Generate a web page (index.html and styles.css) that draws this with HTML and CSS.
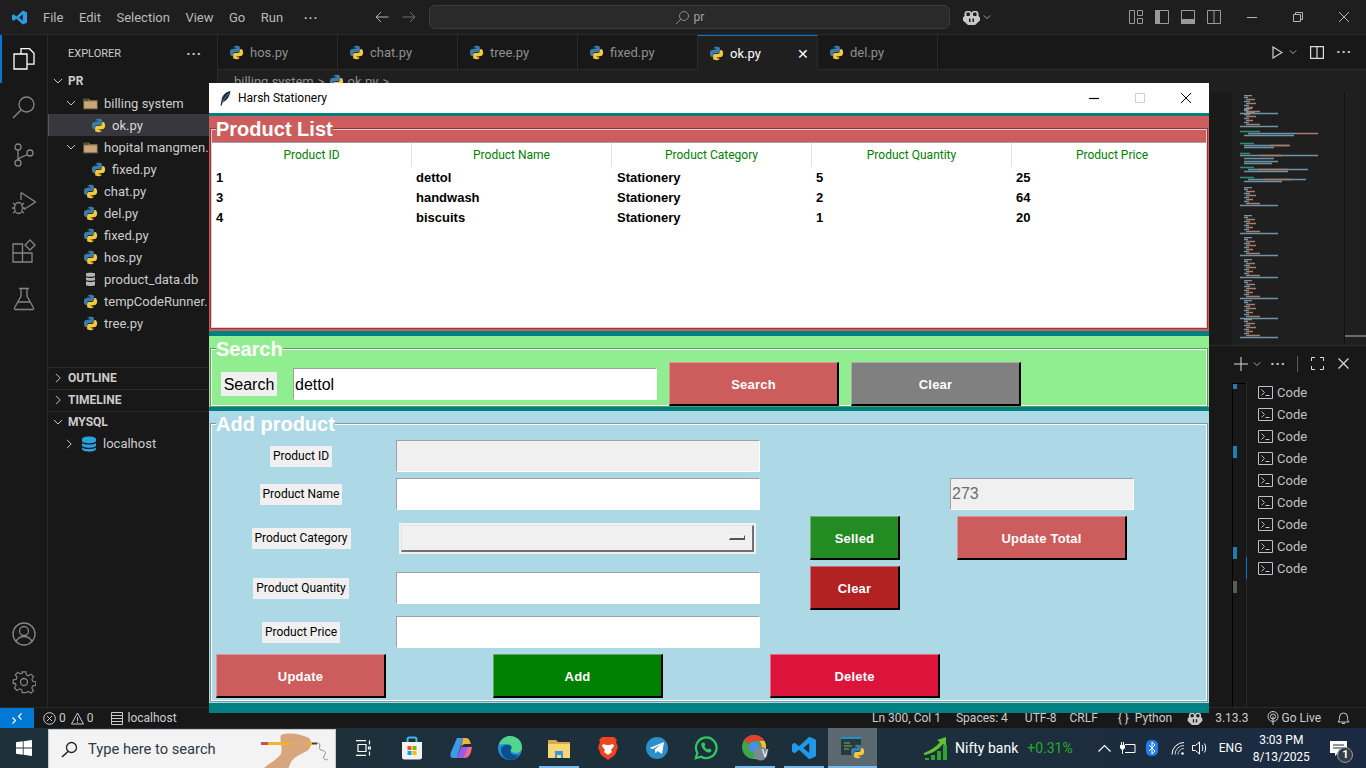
FILE: index.html
```html
<!DOCTYPE html>
<html lang="en">
<head>
    <meta charset="UTF-8">
    <title>Harsh Stationery</title>
    <link rel="stylesheet" href="styles.css">
</head>
<body>

    <!-- shared icons -->
    <svg class="defs" width="0" height="0">
        <symbol id="py" viewBox="0 0 16 16">
            <path fill="#3b7cab" d="M7.9.8C4.9.8 5 2.2 5 2.2v1.5h3v.5H3.5S1 4 1 7.9c0 3.8 2.2 3.7 2.2 3.7h1.2V9.8s-.1-2.2 2.1-2.2h3.1s2 0 2-2V2.6S11.9.8 7.900.8zM6.200 1.900a.6.6 0 1 1 0 1.300.6.6 0 0 1 0-1.300z"/>
            <path fill="#f6c93c" d="M8.100 15.200c3 0 2.900-1.400 2.900-1.400v-1.500H8v-.5h4.500S15 12 15 8.100c0-3.800-2.200-3.700-2.200-3.700h-1.200v1.800s.1 2.200-2.100 2.200H6.400s-2 0-2 2v3s-.3 1.800 3.700 1.800zm1.700-1.100a.6.6 0 1 1 0-1.300.6.6 0 0 1 0 1.300z"/>
        </symbol>
        <symbol id="folder" viewBox="0 0 16 16">
            <path fill="#c8a878" d="M1 5h14v8.500H1z"/>
            <path fill="#8f7750" d="M.5 3h5.700l1.500 1.500h7.800V14H.5zm.8.8v1.200h4.600L5.400 3.800zm0 2v7.400h13.400V5.800z"/>
        </symbol>
        <symbol id="chev-down" viewBox="0 0 10 10">
            <path fill="none" stroke="#c5c5c5" d="M1 3l4 4 4-4"/>
        </symbol>
        <symbol id="chev-right" viewBox="0 0 10 10">
            <path fill="none" stroke="#c5c5c5" d="M3 .8l4.200 4.200L3 9.200"/>
        </symbol>
        <symbol id="term" viewBox="0 0 15 15">
            <path fill="none" stroke="#c0c0c0" d="M.5 1.500h14v12H.5zM3.500 4.500l3 3-3 3M7.500 10.500h4"/>
        </symbol>
        <symbol id="mm-block" viewBox="0 0 60 20">
            <path fill="none" stroke="#6d93a8" stroke-width="1.300" d="M4 .5h8M4 2.500h4M4 6.500h6M4 10.500h5M4 14.500h5"/>
            <path fill="none" stroke="#a87c66" stroke-width="1.300" d="M6 4.500h9M6 8.500h10M6 12.500h7M6 16.500h14"/>
            <path fill="none" stroke="#6d93a8" stroke-width="1.300" d="M0 18.500h38"/>
        </symbol>
    </svg>

    <div class="vscode">
        <header class="titlebar">
            <svg class="logo" width="15" height="15" viewBox="0 0 16 16"><path fill="#2f9ae0" d="M11.500.5L16 2.500v11l-4.500 2-6.800-6.300L1.800 11.500 0 10.500v-5l1.800-1 2.900 2.300zM11.500 4.600L7.600 8l3.900 3.400z"/></svg>
            <nav class="menu">
                <span>File</span><span>Edit</span><span>Selection</span><span>View</span><span>Go</span><span>Run</span><span class="menu-dots">···</span>
            </nav>
            <div class="nav-arrows">
                <svg width="14" height="12" viewBox="0 0 14 12"><path fill="none" stroke="#b0b0b0" d="M13.500 6H1M6 1L1 6l5 5"/></svg>
                <svg width="14" height="12" viewBox="0 0 14 12"><path fill="none" stroke="#6f6f6f" d="M.5 6H13M8 1l5 5-5 5"/></svg>
            </div>
            <div class="command-box">
                <svg width="15" height="15" viewBox="0 0 15 15"><circle cx="9" cy="6" r="4.500" fill="none" stroke="#8c8c8c"/><path stroke="#8c8c8c" d="M5.800 9.200L1 14"/></svg>
                <span>pr</span>
            </div>
            <svg class="copilot" width="17" height="15" viewBox="0 0 17 15"><path fill="#c8c8c8" d="M3 1h4l1.500 1.500L10 1h4l1.500 2v3l1.500 1.500v3L12 15H5L0 10.500v-3L1.500 6V3z"/><path fill="#1e1e1e" d="M3.500 2.500h3l.7 1.500-.7 2h-3zM10.500 2.500h3V6h-3l-.7-2zM6 8.500h1.500V12H6zM9.500 8.500H11V12H9.500z"/></svg>
            <svg class="small-chev" width="8" height="8"><use href="#chev-down"/></svg>
            <div class="layout-icons">
                <svg width="14" height="14" viewBox="0 0 14 14"><path fill="none" stroke="#9a9a9a" d="M.5.500h5v13h-5zM8.500.500h5v5h-5zM8.500 8.500h5v5h-5z"/></svg>
                <svg width="14" height="14" viewBox="0 0 14 14"><rect width="5" height="14" fill="#9a9a9a"/><path fill="none" stroke="#9a9a9a" d="M.5.500h13v13H.5z"/></svg>
                <svg width="14" height="14" viewBox="0 0 14 14"><rect y="9" width="14" height="5" fill="#9a9a9a"/><path fill="none" stroke="#9a9a9a" d="M.5.500h13v13H.5z"/></svg>
                <svg width="14" height="14" viewBox="0 0 14 14"><path fill="none" stroke="#9a9a9a" d="M.5.500h13v13H.5zM7 .5v13"/></svg>
            </div>
            <div class="win-controls">
                <svg width="10" height="10" viewBox="0 0 10 10"><path stroke="#b5b5b5" d="M0 5.500h10"/></svg>
                <svg width="10" height="10" viewBox="0 0 10 10"><path fill="none" stroke="#b5b5b5" d="M.5 2.500h7v7h-7zM2.500 2.500v-2h7v7h-2"/></svg>
                <svg width="10" height="10" viewBox="0 0 10 10"><path stroke="#b5b5b5" d="M0 0l10 10M10 0L0 10"/></svg>
            </div>
        </header>

        <div class="workbench">
            <aside class="activity">
                <div class="act active">
                    <svg width="24" height="24" viewBox="0 0 24 24"><path fill="none" stroke="#fff" stroke-width="1.300" d="M9 7V1.700h8.500l4.500 4.500v11h-7M2 7h13v15H2z"/></svg>
                </div>
                <div class="act">
                    <svg width="24" height="24" viewBox="0 0 24 24"><circle cx="14.500" cy="9.500" r="7.500" fill="none" stroke="#858585" stroke-width="1.300"/><path stroke="#858585" stroke-width="1.500" d="M9 15l-8 8"/></svg>
                </div>
                <div class="act">
                    <svg width="24" height="24" viewBox="0 0 24 24"><g fill="none" stroke="#858585" stroke-width="1.300"><circle cx="6" cy="4" r="3"/><circle cx="6" cy="20" r="3"/><circle cx="18" cy="10" r="3"/><path d="M6 7v10M15.500 11.500C12 14 8 13 6.500 16.500"/></g></svg>
                </div>
                <div class="act">
                    <svg width="24" height="24" viewBox="0 0 24 24"><g fill="none" stroke="#858585" stroke-width="1.300"><path d="M9 1.500L23.500 11 12 18.500M9 9V1.500"/><ellipse cx="6.500" cy="17" rx="4" ry="5.500"/><path d="M1 12l2.500 2M12 12l-2.500 2M0 17h2.500M10.500 17H13M1 22l2-1.500M12 22l-2-1.500"/></g></svg>
                </div>
                <div class="act">
                    <svg width="24" height="24" viewBox="0 0 24 24"><path fill="none" stroke="#858585" stroke-width="1.300" d="M1 5h9.500v18H1zM1 14h19v9h-9.500M10.500 14V5M18 1l5 5-5 5-5-5z"/></svg>
                </div>
                <div class="act">
                    <svg width="24" height="24" viewBox="0 0 24 24"><path fill="none" stroke="#858585" stroke-width="1.300" d="M7 1.500h10M9 1.500V9L2.500 21a1 1 0 0 0 1 1.500h17a1 1 0 0 0 1-1.500L15 9V1.500M6 15h12"/></svg>
                </div>
                <div class="act-spacer"></div>
                <div class="act">
                    <svg width="24" height="24" viewBox="0 0 24 24"><g fill="none" stroke="#858585" stroke-width="1.300"><circle cx="12" cy="12" r="11"/><circle cx="12" cy="9" r="4.500"/><path d="M4 20c1.500-4 4-5.500 8-5.500s6.500 1.500 8 5.500"/></g></svg>
                </div>
                <div class="act">
                    <svg width="24" height="24" viewBox="0 0 24 24"><g fill="none" stroke="#858585" stroke-width="1.300"><circle cx="12" cy="12" r="3.500"/><path d="M10 1h4l.7 3.300 2.200 1 2.900-1.800 2.800 2.800-1.800 2.900 1 2.200 3.200.6v4l-3.300.7-1 2.200 1.800 2.900-2.800 2.800-2.900-1.800-2.200 1L14 24h-4l-.7-3.200-2.200-1-2.900 1.800-2.800-2.800 1.800-2.900-1-2.200L0 14v-4l3.200-.7 1-2.200-1.800-2.900 2.800-2.800 2.900 1.800 2.200-1z" transform="translate(1.200 1) scale(.9)"/></g></svg>
                </div>
            </aside>

            <aside class="sidebar">
                <div class="side-head"><span>EXPLORER</span><span class="side-dots">···</span></div>
                <div class="row sec"><svg class="chev"><use href="#chev-down"/></svg><b>PR</b></div>
                <div class="row folder"><svg class="chev"><use href="#chev-down"/></svg><svg class="ico"><use href="#folder"/></svg>billing system</div>
                <div class="row nested selected"><svg class="ico"><use href="#py"/></svg>ok.py</div>
                <div class="row folder"><svg class="chev"><use href="#chev-down"/></svg><svg class="ico"><use href="#folder"/></svg>hopital mangmen.</div>
                <div class="row nested"><svg class="ico"><use href="#py"/></svg>fixed.py</div>
                <div class="row file"><svg class="ico"><use href="#py"/></svg>chat.py</div>
                <div class="row file"><svg class="ico"><use href="#py"/></svg>del.py</div>
                <div class="row file"><svg class="ico"><use href="#py"/></svg>fixed.py</div>
                <div class="row file"><svg class="ico"><use href="#py"/></svg>hos.py</div>
                <div class="row file">
                    <svg class="ico" viewBox="0 0 15 15"><path fill="#b5b5b5" d="M3 1.500C3 .5 12 .5 12 1.500V4c0 1-9 1-9 0zM3 5.300c2 1 7 1 9 0V8c0 1-9 1-9 0zM3 9.300c2 1 7 1 9 0V13c0 1.300-9 1.300-9 0z"/></svg>product_data.db
                </div>
                <div class="row file"><svg class="ico"><use href="#py"/></svg>tempCodeRunner.</div>
                <div class="row file"><svg class="ico"><use href="#py"/></svg>tree.py</div>
                <div class="side-gap"></div>
                <div class="row sec closed"><svg class="chev"><use href="#chev-right"/></svg><b>OUTLINE</b></div>
                <div class="row sec closed"><svg class="chev"><use href="#chev-right"/></svg><b>TIMELINE</b></div>
                <div class="row sec closed"><svg class="chev"><use href="#chev-down"/></svg><b>MYSQL</b></div>
                <div class="row host">
                    <svg class="chev"><use href="#chev-right"/></svg>
                    <svg class="db" viewBox="0 0 16 16"><path fill="#29a3dc" d="M1 3c0-3.500 14-3.500 14 0v2c0 3-14 3-14 0zM1 7c2.500 2 11.500 2 14 0v2.500c0 3-14 3-14 0zM1 11.500c2.500 2 11.500 2 14 0V13c0 3.500-14 3.500-14 0z"/></svg>
                    localhost
                </div>
            </aside>

            <main class="editor">
                <div class="tabs">
                    <div class="tab"><svg class="ico"><use href="#py"/></svg>hos.py</div>
                    <div class="tab"><svg class="ico"><use href="#py"/></svg>chat.py</div>
                    <div class="tab"><svg class="ico"><use href="#py"/></svg>tree.py</div>
                    <div class="tab"><svg class="ico"><use href="#py"/></svg>fixed.py</div>
                    <div class="tab current"><svg class="ico"><use href="#py"/></svg>ok.py<span class="tab-x">✕</span></div>
                    <div class="tab"><svg class="ico"><use href="#py"/></svg>del.py</div>
                    <div class="tab-actions">
                        <svg class="play" width="11" height="13" viewBox="0 0 11 13"><path fill="none" stroke="#cfcfcf" stroke-width="1.200" d="M1 1l9 5.500L1 12z"/></svg>
                        <svg width="8" height="8"><use href="#chev-down"/></svg>
                        <svg class="split" width="14" height="13" viewBox="0 0 14 13"><path fill="none" stroke="#dcdcdc" stroke-width="1.200" d="M.6.600h12.800v11.800H.6zM7 .6v11.800"/></svg>
                        <span class="side-dots">···</span>
                    </div>
                </div>
                <div class="crumbs">billing system <i>&gt;</i> <svg class="ico"><use href="#py"/></svg> ok.py <i>&gt;</i></div>
                <div class="code-area">
                    <div class="code-shade"></div>
                    <svg class="minimap" width="90" height="250" viewBox="0 0 90 250">
                        <use href="#mm-block" y="2" width="60" height="20"/>
                        <use href="#mm-block" y="15" width="60" height="20"/>
                        <use href="#mm-block" y="94" width="60" height="20"/>
                        <use href="#mm-block" y="122" width="60" height="20"/>
                        <use href="#mm-block" y="144" width="60" height="20"/>
                        <use href="#mm-block" y="166" width="60" height="20"/>
                        <use href="#mm-block" y="187" width="60" height="20"/>
                        <use href="#mm-block" y="207" width="60" height="20"/>
                        <use href="#mm-block" y="226" width="60" height="20"/>
                        <path fill="none" stroke="#2f8f70" stroke-width="1.300" d="M0 38.500h20M0 50.500h14M0 60.500h10M0 74.500h14M0 84.500h14"/>
                        <path fill="none" stroke="#6d93a8" stroke-width="1.300" d="M8 40.500h50M4 42.500h50M4 52.500h45M4 54.500h30M0 62.500h78M4 65.500h30M4 68.500h34M4 70.500h28M8 76.500h60M4 78.500h44M8 86.500h58M4 88.500h38"/>
                        <path fill="none" stroke="#a87c66" stroke-width="1.300" d="M58 40.500h20M30 52.500h20M20 62.500h22M18 76.500h30M24 86.500h28"/>
                    </svg>
                    <div class="minimap-rail"><div class="rail-thumb"></div></div>
                </div>
                <div class="panel">
                    <div class="panel-tools">
                        <svg class="t-plus" width="14" height="14" viewBox="0 0 14 14"><path stroke="#dcdcdc" d="M7 0v14M0 7h14"/></svg>
                        <svg class="t-chev" width="8" height="8"><use href="#chev-down"/></svg>
                        <span class="side-dots">···</span>
                        <span class="tool-sep"></span>
                        <svg class="t-max" width="13" height="13" viewBox="0 0 13 13"><path fill="none" stroke="#dcdcdc" d="M.5 4V.5H4M9 .5h3.500V4M12.500 9v3.500H9M4 12.500H.5V9"/></svg>
                        <svg width="11" height="11" viewBox="0 0 11 11"><path stroke="#dcdcdc" stroke-width="1.200" d="M.5.500l10 10M10.500.500l-10 10"/></svg>
                    </div>
                    <div class="panel-body">
                        <div class="term-strip">
                            <span class="mark m1"></span><span class="mark m2"></span><span class="mark m3"></span><span class="mark m4"></span>
                        </div>
                        <ul class="term-list">
                            <li><svg><use href="#term"/></svg>Code</li>
                            <li><svg><use href="#term"/></svg>Code</li>
                            <li><svg><use href="#term"/></svg>Code</li>
                            <li><svg><use href="#term"/></svg>Code</li>
                            <li><svg><use href="#term"/></svg>Code</li>
                            <li><svg><use href="#term"/></svg>Code</li>
                            <li><svg><use href="#term"/></svg>Code</li>
                            <li><svg><use href="#term"/></svg>Code</li>
                            <li class="last"><svg><use href="#term"/></svg>Code</li>
                        </ul>
                    </div>
                </div>
            </main>
        </div>

        <footer class="statusbar">
            <div class="remote"><svg width="10" height="11" viewBox="0 0 10 11"><path fill="none" stroke="#fff" stroke-width="1.200" d="M.5 4.500l3 3-3 3M9.500.5l-3 3 3 3"/></svg></div>
            <div class="st-left">
                <svg width="13" height="13" viewBox="0 0 13 13"><circle cx="6.500" cy="6.500" r="5.800" fill="none" stroke="#ccc"/><path stroke="#ccc" d="M4 4l5 5M9 4l-5 5"/></svg><span>0</span>
                <svg class="st-warn" width="13" height="13" viewBox="0 0 13 13"><path fill="none" stroke="#ccc" d="M6.500 1L12.500 12H.5zM6.500 5v4M6.500 10v1"/></svg><span>0</span>
                <svg class="st-db" width="12" height="13" viewBox="0 0 12 13"><path fill="none" stroke="#ccc" d="M.5.500h11v3H.5zM.5 3.500h11v3H.5zM.5 6.500h11v3H.5zM.5 9.500h11v3H.5z"/></svg><span>localhost</span>
            </div>
            <div class="st-right">
                <span>Ln 300, Col 1</span>
                <span class="s-sp">Spaces: 4</span>
                <span class="s-en">UTF-8</span>
                <span class="s-cr">CRLF</span>
                <span class="s-py">{ }&nbsp; Python</span>
                <svg class="s-co" width="16" height="13" viewBox="0 0 17 15"><path fill="#c8c8c8" d="M3 1h4l1.500 1.500L10 1h4l1.500 2v3l1.500 1.500v3L12 15H5L0 10.500v-3L1.500 6V3z"/><path fill="#181818" d="M3.500 2.500h3l.7 1.500-.7 2h-3zM10.500 2.500h3V6h-3l-.7-2zM6 8.500h1.500V12H6zM9.500 8.500H11V12H9.500z"/></svg>
                <span class="s-ve">3.13.3</span>
                <svg class="s-lv" width="12" height="14" viewBox="0 0 12 14"><g fill="none" stroke="#ccc"><circle cx="6" cy="5.500" r="5"/><circle cx="6" cy="5.500" r="2.500"/><path d="M6 5.500V14"/></g></svg>
                <span class="s-gl">Go Live</span>
                <svg class="s-be" width="13" height="14" viewBox="0 0 13 14"><path fill="none" stroke="#ccc" d="M1 11c1.500-1.500 1.500-3 1.500-5a4 4 0 0 1 8 0c0 2 0 3.500 1.500 5zM5 12.500h3"/></svg>
            </div>
        </footer>
    </div>

    <footer class="taskbar">
        <div class="start">
            <svg width="16" height="16" viewBox="0 0 16 16"><path fill="#fff" d="M0 2.300L6.800 1.300V7.600H0zM7.600 1.200L16 0V7.600H7.600zM0 8.400H6.800V14.700L0 13.700zM7.600 8.400H16V16L7.600 14.800z"/></svg>
        </div>
        <div class="search-box">
            <svg width="17" height="17" viewBox="0 0 17 17"><circle cx="10.500" cy="6.500" r="5" fill="none" stroke="#222" stroke-width="1.300"/><path stroke="#222" stroke-width="1.600" d="M7 10.500L1 16"/></svg>
            <span>Type here to search</span>
            <svg class="doodle" width="72" height="39" viewBox="0 0 72 39">
                <path fill="#d8a67e" d="M2 39C8 33 16 30 20 24 22 18 18 8 20 5 28 2 40 4 48 8 52 12 50 18 46 21 40 24 34 26 30 32L27 39z"/>
                <path stroke="#f0b429" stroke-width="3" d="M7 13.500h44"/>
                <path stroke="#c0565a" stroke-width="3" d="M0 13.500h7"/>
                <path stroke="#4a3a20" stroke-width="2" d="M51 13.500h5"/>
                <path fill="#d8a67e" d="M28 10h16l2 2v4l-4 3H30z" opacity=".9"/>
                <path fill="none" stroke="#8d8d8d" d="M56 13c6 0 0 6 4 7 4 1 6 2 3 6-2 3 3 5 4 3"/>
            </svg>
        </div>
        <div class="slot"><svg width="16" height="16" viewBox="0 0 16 16"><path fill="none" stroke="#fff" stroke-width="1.200" d="M1 .6h10M3 4.500h8v7H3zM1 15.400h10M14.500 .5v4M14.500 11.500v4M13.500 7h2v2h-2z"/></svg></div>
        <div class="slot"><svg width="22" height="24" viewBox="0 0 22 24"><path fill="none" stroke="#45b6f0" stroke-width="2" d="M6.500 6V3.500a2 2 0 0 1 2-2h5a2 2 0 0 1 2 2V6"/><path fill="#f2f2f2" d="M1 6h20v15a2.500 2.500 0 0 1-2.500 2.500h-15A2.500 2.500 0 0 1 1 21z"/><rect x="6.500" y="10" width="4" height="4" fill="#f25022"/><rect x="11.500" y="10" width="4" height="4" fill="#7fba00"/><rect x="6.500" y="15" width="4" height="4" fill="#00a4ef"/><rect x="11.500" y="15" width="4" height="4" fill="#ffb900"/></svg></div>
        <div class="slot"><svg width="22" height="22" viewBox="0 0 22 22"><path fill="#3a9be8" d="M7 1h6l-6 20H3C0 21 0 18 1 15z"/><path fill="#f2688e" d="M9 21h6c3 0 5-3 6-6l1-5h-7z"/><path fill="#f0b43c" d="M13 1h3c3 0 4 3 5 6h-6c-2 0-3 2-4 3z"/><path fill="#9a5be8" d="M7 21l4-11h7l-4 11z"/></svg></div>
        <div class="slot"><svg width="24" height="24" viewBox="0 0 24 24"><circle cx="12" cy="12" r="12" fill="#1b8fd8"/><path fill="#52d58a" d="M1 9C3 2 9 0 12 0c7 0 12 5 12 11 0 4-3 6-6 6-4 0-6-2-5-4 2-2 0-5-4-5-3 0-6 0-8 1z"/><path fill="#0d4f8b" d="M13 24C7 24 3 19 3 14c0-3 3-5 6-5 4 0 5 2 4 4-2 3 0 6 5 6 1 0 2 0 3-1-2 3-5 6-8 6z"/></svg></div>
        <div class="slot running"><svg width="22" height="19" viewBox="0 0 22 19"><path fill="#d7a94e" d="M0 1h8l2 2h12v4H0z"/><path fill="#f8d775" d="M0 5h22v14H0z"/><path fill="#3a96dd" d="M7 12h8v7h-2v-3H9v3H7z"/></svg></div>
        <div class="slot"><svg width="20" height="24" viewBox="0 0 20 24"><path fill="#f0441f" d="M4 1h12l3 3-1 2 2 5-3 8-7 5-7-5-3-8 2-5-1-2z"/><path fill="#fff" d="M5 8l4 1h2l4-1 1 2-3 4 1 2-4 3-4-3 1-2-3-4z"/></svg></div>
        <div class="slot"><svg width="22" height="22" viewBox="0 0 22 22"><circle cx="11" cy="11" r="11" fill="#2a8fc9"/><path fill="#fff" d="M3.500 11L18 5l-2 12-4.500-3-2 2.500-.7-4L15 7l-8 5z"/></svg></div>
        <div class="slot"><svg width="24" height="24" viewBox="0 0 24 24"><path fill="none" stroke="#2fc95d" stroke-width="2.200" d="M1.800 22.200l1.500-5.400A10.300 10.300 0 1 1 7.200 20.700z"/><path fill="#2fc95d" d="M8.500 6.500c-1 .5-1.500 2-1 3.500 1 3 3.500 5.500 6.500 6.500 1.500.4 3-.5 3.500-1.500l-.3-1.500-2.300-1-1 1c-1.500-.5-3-2-3.500-3.500l1-1-1-2.300z"/></svg></div>
        <div class="slot running">
            <svg width="26" height="26" viewBox="0 0 26 26"><circle cx="12" cy="12" r="12" fill="#3da64a"/><path fill="#e34133" d="M12 0a12 12 0 0 1 10.400 6H12a6 6 0 0 0-5.500 3.500L2.200 5A12 12 0 0 1 12 0z"/><path fill="#fbc02d" d="M22.400 6A12 12 0 0 1 12 24l5-8a6 6 0 0 0 0-10z"/><circle cx="12" cy="12" r="5" fill="#4b8bf5"/><circle cx="18.500" cy="18.500" r="7" fill="#7a8a94"/></svg>
            <span class="chrome-v">V</span>
        </div>
        <div class="slot running"><svg width="24" height="24" viewBox="0 0 16 16"><path fill="#1f9ae8" d="M11.500.5L16 2.500v11l-4.500 2-6.800-6.300L1.800 11.500 0 10.500v-5l1.800-1 2.900 2.300zM11.500 4.600L7.600 8l3.900 3.400z"/></svg></div>
        <div class="slot slot-on">
            <svg width="24" height="24" viewBox="0 0 24 24"><rect y="1" width="20" height="18" fill="#2a3a34"/><rect y="1" width="20" height="2" fill="#1f90d8"/><path stroke="#6fae7a" d="M3 7h6M3 10h8M3 13h5"/><svg x="9" y="8" width="15" height="15"><use href="#py"/></svg></svg>
        </div>
        <div class="tray">
            <svg class="nifty" width="24" height="24" viewBox="0 0 24 24"><path fill="#2ea32e" d="M1 22h4v2H1zM7 19h4v5H7zM13 15h4v9h-4zM19 9h4v15h-4z"/><path fill="#63c22f" d="M0 17C7 14 12 11 16 6l-3-2 9-3 0 9-3-2C15 13 8 18 0 19z"/></svg>
            <span class="nifty-name">Nifty bank</span>
            <span class="nifty-val">+0.31%</span>
            <svg class="t-up" width="13" height="8" viewBox="0 0 13 8"><path fill="none" stroke="#fff" stroke-width="1.200" d="M.5 7.500l6-6 6 6"/></svg>
            <svg class="t-bat" width="16" height="12" viewBox="0 0 16 12"><path fill="none" stroke="#fff" d="M5 2.500h10v8H5"/><path fill="#fff" d="M0 3h5v3L3 8v4H2V8L0 6zM1 0h1v3H1zM3 0h1v3H3z"/></svg>
            <svg class="t-bt" width="12" height="16" viewBox="0 0 12 16"><rect width="12" height="16" rx="5" fill="#1f7ee8"/><path fill="none" stroke="#fff" d="M3 5l6 6-3 3V2l3 3-6 6"/></svg>
            <svg class="t-wifi" width="15" height="13" viewBox="0 0 15 13"><g fill="none" stroke="#fff"><path d="M1 12.500A12 12 0 0 1 13 .5"/><path d="M4 12.500A9 9 0 0 1 13 3.500" opacity=".8"/><path d="M7 12.500A6 6 0 0 1 13 6.500" opacity=".7"/></g><circle cx="11.500" cy="11.500" r="1.300" fill="#fff"/></svg>
            <svg class="t-vol" width="16" height="14" viewBox="0 0 16 14"><path fill="none" stroke="#fff" d="M.5 4.500h3L7.500 1v12l-4-3.500h-3zM10 4c1 2 1 4 0 6M12.500 2.500c1.500 3 1.500 6 0 9"/></svg>
            <span class="t-lang">ENG</span>
            <div class="clock"><span>3:03 PM</span><span>8/13/2025</span></div>
            <div class="notify">
                <svg width="17" height="15" viewBox="0 0 17 15"><path fill="#fff" d="M0 0h17v12H8l-3 3v-3H0z"/><path stroke="#1c2a3c" d="M3 4h11M3 7h11"/></svg>
                <span class="n-count">1</span>
            </div>
        </div>
    </footer>

    <!-- the tkinter window, floating over the editor -->
    <section class="tk-window">
        <div class="tk-title">
            <svg width="11" height="15" viewBox="0 0 11 15"><path fill="#1b2c44" d="M10.500 0C5 1 2 5 1.500 9.500L.5 14.500l1 .2L2.800 11C7 10 9.800 5 10.500 0z"/><path stroke="#8fb0d0" stroke-width=".6" d="M8.500 2.500L2.500 10.500"/></svg>
            <span>Harsh Stationery</span>
            <div class="tk-controls">
                <svg width="10" height="10" viewBox="0 0 10 10"><path stroke="#000" stroke-width="1.200" d="M0 5.500h10"/></svg>
                <svg width="10" height="10" viewBox="0 0 10 10"><path fill="none" stroke="#cfcfcf" d="M.5.500h9v9h-9z"/></svg>
                <svg width="10" height="10" viewBox="0 0 10 10"><path stroke="#000" d="M0 0l10 10M10 0L0 10"/></svg>
            </div>
        </div>

        <div class="tk-panel list-panel">
            <fieldset class="group">
                <legend>Product List</legend>
                <div class="tree">
                    <table>
                        <thead>
                            <tr><th>Product ID</th><th>Product Name</th><th>Product Category</th><th>Product Quantity</th><th>Product Price</th></tr>
                        </thead>
                        <tbody>
                            <tr><td>1</td><td>dettol</td><td>Stationery</td><td>5</td><td>25</td></tr>
                            <tr><td>3</td><td>handwash</td><td>Stationery</td><td>2</td><td>64</td></tr>
                            <tr><td>4</td><td>biscuits</td><td>Stationery</td><td>1</td><td>20</td></tr>
                        </tbody>
                    </table>
                </div>
            </fieldset>
        </div>

        <div class="tk-panel search-panel">
            <fieldset class="group">
                <legend>Search</legend>
                <div class="search-row">
                    <label class="search-label">Search</label>
                    <input class="entry search-entry" value="dettol">
                    <button class="btn red">Search</button>
                    <button class="btn gray">Clear</button>
                </div>
            </fieldset>
        </div>

        <div class="tk-panel add-panel">
            <fieldset class="group">
                <legend>Add product</legend>
                <div class="add-grid">
                    <label class="field-label">Product ID</label>
                    <input class="entry locked c2" disabled>

                    <label class="field-label">Product Name</label>
                    <input class="entry c2">
                    <input class="entry locked total" value="273" disabled>

                    <label class="field-label">Product Category</label>
                    <div class="combo c2"><div class="combo-inner"><span class="combo-arrow"></span></div></div>
                    <button class="btn forest c3">Selled</button>
                    <button class="btn red">Update Total</button>

                    <label class="field-label">Product Quantity</label>
                    <input class="entry c2">
                    <button class="btn brick c3">Clear</button>

                    <label class="field-label">Product Price</label>
                    <input class="entry c2">

                    <button class="btn red wide">Update</button>
                    <button class="btn green wide">Add</button>
                    <button class="btn crimson wide">Delete</button>
                </div>
            </fieldset>
        </div>
    </section>

</body>
</html>
```

FILE: styles.css
```css
* {
    box-sizing: border-box;
}
html, body {
    margin: 0;
    padding: 0;
}
body {
    position: relative;
    width: 1366px;
    height: 768px;
    overflow: hidden;
    font-family: Roboto, "Noto Sans", sans-serif;
    font-size: 13px;
    color: #cccccc;
    background: #181818;
}
svg {
    display: block;
    flex: none;
}
.defs {
    position: absolute;
}

/* VS Code shell */
.vscode {
    display: flex;
    flex-direction: column;
    height: 728px;
}
.titlebar {
    display: flex;
    align-items: center;
    height: 35px;
    flex: none;
    padding-left: 12px;
    background: #1e1e1e;
    border-bottom: 1px solid #2b2b2b;
}
.menu {
    display: flex;
    gap: 15.5px;
    width: 332px;
    margin-left: 16px;
    color: #b9b9b9;
}
.menu-dots {
    margin-left: 5px;
    font-weight: bold;
    letter-spacing: 1px;
}
.nav-arrows {
    display: flex;
    gap: 13px;
}
.command-box {
    display: flex;
    align-items: center;
    justify-content: center;
    gap: 4px;
    width: 521px;
    height: 24px;
    margin-left: 13px;
    background: #2a2a2a;
    border: 1px solid #3c3c3c;
    border-radius: 6px;
    color: #a0a0a0;
    font-size: 12px;
}
.copilot {
    margin-left: 13px;
}
.small-chev {
    margin-left: 3px;
}
.layout-icons {
    display: flex;
    gap: 12px;
    margin-left: 138px;
}
.win-controls {
    display: flex;
    gap: 36px;
    margin-left: 26px;
}

.workbench {
    display: flex;
    flex: 1;
    min-height: 0;
}
.activity {
    display: flex;
    flex-direction: column;
    width: 48px;
    flex: none;
    padding-bottom: 1px;
    background: #181818;
    border-right: 1px solid #2b2b2b;
}
.act {
    display: flex;
    align-items: center;
    justify-content: center;
    height: 48px;
    flex: none;
}
.act.active {
    border-left: 2px solid #0078d4;
    padding-right: 2px;
}
.act-spacer {
    flex: 1;
}
.sidebar {
    width: 170px;
    flex: none;
    background: #181818;
    border-right: 1px solid #2b2b2b;
    white-space: nowrap;
    overflow: hidden;
}
.side-head {
    display: flex;
    align-items: center;
    justify-content: space-between;
    height: 35px;
    padding: 2px 15px 0 20px;
    font-size: 11px;
}
.side-dots {
    font-weight: bold;
    font-size: 14px;
    letter-spacing: 1px;
    color: #cccccc;
}
.row {
    display: flex;
    align-items: center;
    height: 22px;
}
.row b {
    font-size: 12px;
    font-weight: 700;
}
.chev {
    width: 10px;
    height: 10px;
}
.ico {
    width: 15px;
    height: 15px;
}
.sec {
    gap: 5px;
    padding-left: 5px;
}
.sec.closed {
    padding-bottom: 1px;
    border-top: 1px solid #2b2b2b;
}
.folder {
    padding-left: 18px;
}
.folder .ico {
    margin: 0 6px 0 7px;
}
.nested {
    padding-left: 43px;
}
.nested .ico, .file .ico {
    margin-right: 6px;
}
.file {
    padding-left: 35px;
}
.selected {
    background: #37373d;
    box-shadow: inset 21px 0 0 -20px #585858;
    color: #d8d8d8;
}
.side-gap {
    height: 33px;
}
.host {
    height: 21px;
    padding-left: 16px;
}
.db {
    width: 16px;
    height: 16px;
    margin: 0 6px 0 7px;
}

.editor {
    display: flex;
    flex-direction: column;
    flex: 1;
    min-width: 0;
    background: #1f1f1f;
}
.tabs {
    display: flex;
    height: 35px;
    flex: none;
    background: #181818;
    border-bottom: 1px solid #2b2b2b;
}
.tab {
    display: flex;
    align-items: center;
    width: 120px;
    padding: 1px 0 0 11px;
    gap: 6px;
    color: #8f8f8f;
    border-right: 1px solid #2b2b2b;
}
.tab.current {
    background: #1f1f1f;
    color: #ffffff;
    border-top: 1px solid #0078d4;
    height: 35px;
}
.tab-x {
    margin-left: auto;
    margin-right: 8px;
    font-size: 14px;
}
.tab-actions {
    display: flex;
    align-items: center;
    margin-left: auto;
    padding-right: 14px;
}
.tab-actions .play {
    margin-right: 6px;
}
.tab-actions .split {
    margin: 0 12px 0 13px;
}
.crumbs {
    display: flex;
    align-items: center;
    gap: 4px;
    height: 22px;
    flex: none;
    padding-left: 16px;
    color: #8f8f8f;
}
.crumbs i {
    font-style: normal;
}
.code-area {
    display: flex;
    flex: 1;
    min-height: 0;
}
.code-shade {
    width: 1014px;
    background: #1a1a1a;
}
.minimap {
    margin: 1px 0 0 8px;
}
.minimap-rail {
    margin-left: 14px;
    flex: 1;
    border-left: 1px solid #111111;
}
.rail-thumb {
    height: 2px;
    margin-top: 243px;
    background: #6a6a6a;
}
.panel {
    display: flex;
    flex-direction: column;
    height: 362px;
    flex: none;
    background: #181818;
    border-top: 1px solid #2b2b2b;
}
.panel-tools {
    display: flex;
    align-items: center;
    justify-content: flex-end;
    height: 35px;
    flex: none;
    padding-right: 17px;
}
.t-plus {
    margin-right: 5px;
}
.t-chev {
    margin-right: 9px;
}
.tool-sep {
    width: 1px;
    height: 16px;
    margin: 0 13px 0 11px;
    background: #5a5a5a;
}
.t-max {
    margin-right: 14px;
}
.panel-body {
    display: flex;
    justify-content: flex-end;
    flex: 1;
    min-height: 0;
}
.term-strip {
    position: relative;
    width: 14px;
    border-left: 1px solid #000000;
    border-top: 1px solid #000000;
    margin-top: 2px;
}
.mark {
    position: absolute;
    left: 0;
    width: 4px;
    background: #1a7fae;
}
.m1 { top: 0; height: 5px; }
.m2 { top: 62px; height: 12px; }
.m3 { top: 163px; height: 12px; }
.m4 { top: 197px; height: 12px; background: #5a5a5a; }
.term-list {
    width: 120px;
    margin: 0;
    padding: 0;
    list-style: none;
    border-left: 1px solid #2b2b2b;
}
.term-list li {
    display: flex;
    align-items: center;
    gap: 4px;
    height: 22px;
    padding-left: 11px;
    color: #c0c0c0;
}
.term-list svg {
    width: 15px;
    height: 15px;
}
.term-list .last {
    box-shadow: -1px 0 0 #0078d4;
}

.statusbar {
    display: flex;
    align-items: center;
    height: 21px;
    flex: none;
    background: #181818;
    border-top: 1px solid #2b2b2b;
    font-size: 12px;
}
.remote {
    display: flex;
    align-items: center;
    justify-content: center;
    width: 34px;
    height: 100%;
    background: #0078d4;
}
.st-left {
    display: flex;
    align-items: center;
    gap: 3px;
    margin-left: 9px;
}
.st-left .st-warn {
    margin-left: 2px;
}
.st-left .st-db {
    margin-left: 14px;
    margin-right: 2px;
}
.st-right {
    display: flex;
    align-items: center;
    margin-left: auto;
    padding-right: 16px;
}
.s-sp { margin-left: 15px; }
.s-en { margin-left: 17px; }
.s-cr { margin-left: 13px; }
.s-py { margin-left: 20px; }
.s-co { margin-left: 15px; }
.s-ve { margin-left: 12px; }
.s-lv { margin-left: 18px; }
.s-gl { margin-left: 3px; }
.s-be { margin-left: 16px; }

/* Windows taskbar */
.taskbar {
    display: flex;
    align-items: center;
    height: 40px;
    background: linear-gradient(90deg, #1e3039, #1d2f3b 60%, #1b2a42);
}
.start {
    display: flex;
    align-items: center;
    justify-content: center;
    width: 48px;
    height: 40px;
    flex: none;
}
.search-box {
    position: relative;
    display: flex;
    align-items: center;
    width: 288px;
    height: 39px;
    margin: 1px 2px 0 0;
    flex: none;
    padding-left: 12px;
    background: #f3f3f3;
    border: 1px solid #c8c8c8;
    border-width: 1px 1px 0;
    color: #2b3a45;
    font-size: 14.7px;
    overflow: hidden;
}
.search-box span {
    margin-left: 10px;
}
.search-box .doodle {
    position: absolute;
    left: 212px;
    top: 0;
}
.slot {
    position: relative;
    display: flex;
    align-items: center;
    justify-content: center;
    width: 49px;
    height: 40px;
    flex: none;
}
.running {
    background: linear-gradient(#76b9ed, #76b9ed) center bottom / 40px 2px no-repeat;
}
.slot-on {
    background: #5b6870;
    box-shadow: inset 0 -2px 0 #76b9ed;
}
.chrome-v {
    position: absolute;
    left: 28px;
    top: 20px;
    width: 14px;
    text-align: center;
    color: #ffffff;
    font-size: 10px;
}
.tray {
    display: flex;
    align-items: center;
    height: 40px;
    margin-left: 47px;
    color: #ffffff;
}
.nifty-name {
    margin-left: 7px;
    font-size: 14px;
}
.nifty-val {
    margin-left: 9px;
    color: #22b022;
    font-size: 14px;
}
.t-up { margin-left: 25px; }
.t-bat { margin-left: 9px; }
.t-bt { margin-left: 10px; }
.t-wifi { margin-left: 13px; }
.t-vol { margin-left: 6px; }
.t-lang {
    margin-left: 11px;
    font-size: 12px;
}
.clock {
    display: flex;
    flex-direction: column;
    align-items: center;
    gap: 3px;
    width: 64px;
    margin-left: 7px;
    font-size: 12px;
}
.notify {
    position: relative;
    margin-left: 17px;
}
.n-count {
    position: absolute;
    left: 7px;
    top: 6px;
    width: 16px;
    height: 16px;
    border-radius: 50%;
    border: 1px solid #9a9a9a;
    background: #333e48;
    text-align: center;
    font-size: 11px;
    font-weight: bold;
    line-height: 14px;
}

/* Tkinter window */
.tk-window {
    position: absolute;
    left: 209px;
    top: 83px;
    display: flex;
    flex-direction: column;
    width: 1000px;
    height: 630px;
    background: #008080;
    color: #000000;
}
.tk-title {
    display: flex;
    align-items: center;
    height: 30px;
    flex: none;
    padding-left: 11px;
    background: #ffffff;
    font-size: 12px;
}
.tk-title span {
    margin-left: 7px;
}
.tk-controls {
    display: flex;
    gap: 36px;
    margin-left: auto;
    margin-right: 18px;
}
.tk-panel {
    flex: none;
    padding: 0 1px;
    font-family: "Liberation Sans", Arial, sans-serif;
}
.list-panel {
    height: 215px;
    margin-top: 3px;
    padding-bottom: 2px;
    background: #cd5c5c;
}
.search-panel {
    height: 71px;
    margin-top: 5px;
    background: #90ee90;
}
.add-panel {
    height: 292px;
    margin-top: 4px;
    padding-bottom: 1px;
    background: #add8e6;
}
.group {
    height: 100%;
    min-width: 0;
    margin: 0;
    padding: 0;
    border: 1px solid #7f9a9f;
    box-shadow: inset 0 0 0 1px #ffffff;
}
.list-panel .group {
    border-color: #8b3a3a;
    box-shadow: inset 0 0 0 1px #f3c9c9;
}
.search-panel .group {
    border-color: #5f9a5f;
}
.group legend {
    position: relative;
    top: 1px;
    margin-left: 5px;
    padding: 1px 0 0;
    font-size: 20px;
    font-weight: bold;
    line-height: 23px;
    color: #ffffff;
}
.list-panel legend { background: #cd5c5c; }
.search-panel legend { background: #90ee90; }
.add-panel legend { background: #add8e6; }

.tree {
    height: 185px;
    margin: 2px 1px 0;
    overflow: hidden;
    background: #ffffff;
    border-top: 1px solid #a0a0b0;
}
.tree table {
    width: 1000px;
    table-layout: fixed;
    border-collapse: separate;
    border-spacing: 0;
}
.tree th {
    height: 24px;
    padding: 0 0 1px;
    font: normal 12px Roboto, "Noto Sans", sans-serif;
    color: #008000;
    border-right: 1px solid #e5e5e5;
}
.tree th:last-child {
    border-right: none;
}
.tree td {
    height: 20px;
    padding: 0 0 0 4px;
    font-size: 13px;
    font-weight: bold;
}
.tree td:nth-child(3) {
    padding-left: 5px;
}

.search-row {
    display: flex;
    align-items: center;
    height: 44px;
    margin-top: 2px;
    padding-left: 10px;
}
.search-label {
    width: 56px;
    height: 24px;
    margin-right: 16px;
    background: #f0f0f0;
    text-align: center;
    font-size: 16px;
    line-height: 25px;
}
.entry {
    height: 32px;
    padding: 1px 1px 0;
    border: 1px solid;
    border-color: #a0a0a0 #ffffff #ffffff #a0a0a0;
    border-radius: 0;
    background: #ffffff;
    font: 16px "Liberation Sans", Arial, sans-serif;
    color: #000000;
    outline: none;
}
.search-entry {
    width: 364px;
    margin-right: 12px;
}
.search-row .btn {
    margin-right: 12px;
}
.entry.locked {
    background: #f0f0f0;
    color: #6d6d6d;
}
.entry.total {
    padding-top: 0;
}

.btn {
    width: 170px;
    height: 44px;
    padding: 2px 0 0;
    border: 1px solid;
    border-width: 1px 2px 2px 1px;
    border-color: rgba(255, 255, 255, 0.35) #000000 #000000 rgba(255, 255, 255, 0.35);
    font: bold 13px "Liberation Sans", Arial, sans-serif;
    letter-spacing: 0.2px;
    color: #ffffff;
}
.red { background: #cd5c5c; }
.gray { background: #808080; }
.forest { background: #228b22; width: 90px; }
.brick { background: #b22222; width: 90px; }
.green { background: #008000; }
.crimson { background: #dc143c; }

.add-grid {
    display: grid;
    grid-template-columns: 170px 364px 170px 184px;
    grid-template-rows: 32px 32px 44px 44px 32px 44px;
    gap: 6px 10px;
    margin: 5px 0 0 5px;
}
.add-grid > * {
    justify-self: center;
    align-self: center;
}
.c2 {
    grid-column: 2;
}
.c3 {
    grid-column: 3;
}
.field-label {
    grid-column: 1;
    height: 21px;
    padding: 0 3px;
    background: #f0f0f0;
    font: 12px/21px Roboto, "Noto Sans", sans-serif;
}
.add-grid .entry.c2 {
    width: 364px;
}
.total {
    grid-column: 4;
    grid-row: 2;
    width: 184px;
}
.add-grid .combo {
    justify-self: start;
    width: 357px;
    height: 31px;
    margin-left: 3px;
    padding: 2px;
    background: #f0f0f0;
}
.combo-inner {
    display: flex;
    align-items: center;
    justify-content: flex-end;
    height: 100%;
    padding-right: 7px;
    border: 1px solid;
    border-width: 1px 2px 2px 1px;
    border-color: #e4e4e4 #707070 #707070 #e4e4e4;
    background: #f0f0f0;
}
.combo-arrow {
    width: 16px;
    height: 5px;
    border: 1px solid;
    border-width: 1px 1px 2px 1px;
    border-color: #f8f8f8 #555555 #555555 #f8f8f8;
}
.wide {
    grid-row: 6;
}
.add-grid .wide:nth-last-child(3) { grid-column: 1; }
.add-grid .wide:nth-last-child(2) { grid-column: 2; }
.add-grid .wide:nth-last-child(1) { grid-column: 3; }
```
